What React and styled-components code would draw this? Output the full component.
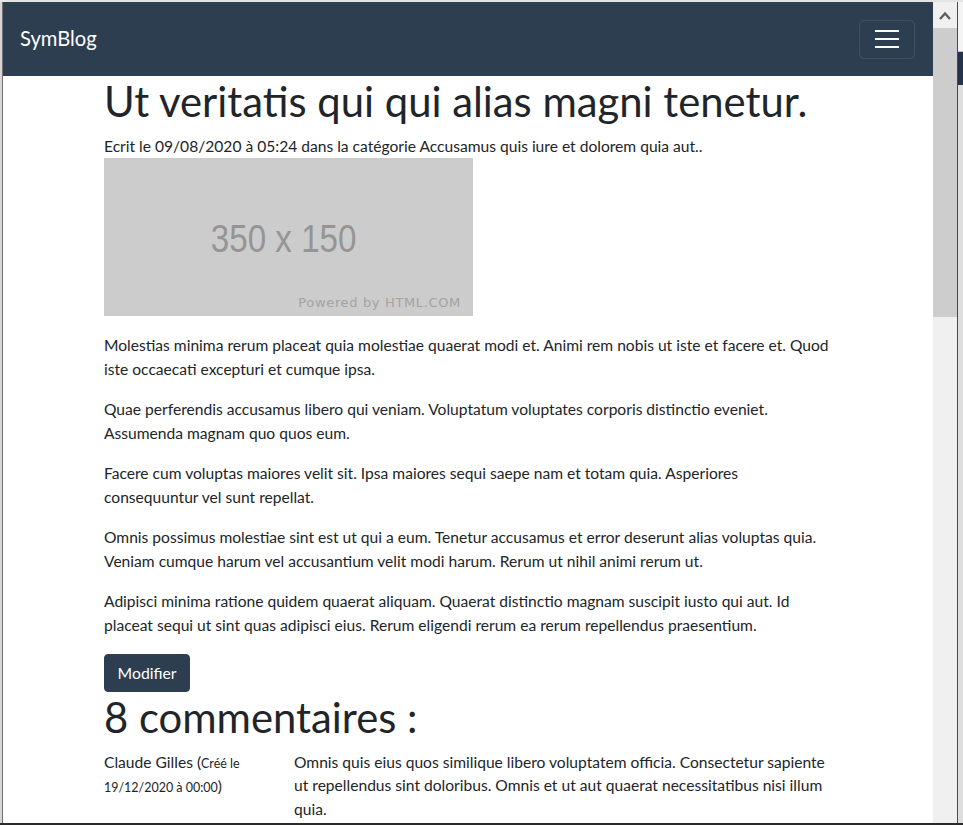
import styled, { createGlobalStyle } from "styled-components";

const GlobalStyle = createGlobalStyle`
  html, body {
    margin: 0;
    padding: 0;
    background: #f0f0f0;
  }
  * {
    box-sizing: border-box;
  }
`;

const Desktop = styled.div`
  width: 963px;
  height: 825px;
  display: flex;
  flex-direction: column;
  overflow: hidden;
  background: #e6e6e6;
  font-family: Lato, "Noto Sans", sans-serif;
`;

const TopEdge = styled.div`
  height: 2px;
  flex: none;
  background: #e4e4e4;
`;

const BottomEdge = styled.div`
  height: 2px;
  flex: none;
  background: #2a2a2a;
`;

const WindowRow = styled.div`
  flex: 1;
  display: flex;
  min-height: 0;
`;

const LeftEdge = styled.div`
  width: 3px;
  flex: none;
  background: #d6d6d6;
  border-right: 1px solid #707070;
`;

const RightEdge = styled.div`
  width: 6px;
  flex: none;
  border-left: 1px solid #4a4a4a;
  background: linear-gradient(
    to bottom,
    #f4f4f4 0,
    #f4f4f4 49px,
    #e8d000 49px,
    #e8d000 50px,
    #25324a 50px,
    #25324a 83px,
    #dedede 83px
  );
`;

const Viewport = styled.div`
  width: 930px;
  flex: none;
  overflow: hidden;
  background: #fff;
  color: #212529;
`;

const Scrollbar = styled.div`
  width: 24px;
  flex: none;
  display: flex;
  flex-direction: column;
  background: #f0f0f0;
`;

const ScrollButton = styled.div`
  height: 26px;
  display: flex;
  align-items: center;
  justify-content: center;
  background: #f0f0f0;
`;

const ScrollThumb = styled.div`
  height: 289px;
  background: #cdcdcd;
`;

const Navbar = styled.nav`
  height: 74px;
  display: flex;
  align-items: center;
  justify-content: space-between;
  padding: 0 18px 0 17px;
  background: #2c3e50;
`;

const Brand = styled.a`
  color: #fff;
  font-size: 20.2px;
  text-decoration: none;
  padding-bottom: 2px;
`;

const Toggler = styled.button`
  width: 56px;
  height: 39px;
  display: flex;
  flex-direction: column;
  align-items: center;
  justify-content: center;
  gap: 6px;
  background: transparent;
  border: 1px solid rgba(255, 255, 255, 0.1);
  border-radius: 5px;
  padding: 0;
`;

const Bar = styled.span`
  display: block;
  width: 24px;
  height: 2px;
  background: #fff;
`;

const Container = styled.main`
  width: 730px;
  margin-left: 101px;
  font-size: 15.6px;
  line-height: 23.6px;
`;

const Title = styled.h1`
  margin: 0 0 8.4px;
  font-size: 41.8px;
  font-weight: 400;
  line-height: 50.4px;
`;

const Meta = styled.p`
  margin: 1px 0 0;
`;

const Placeholder = styled.div`
  width: 369px;
  height: 158px;
  margin-bottom: 18px;
  display: grid;
  background: #cccccc;
`;

const PlaceholderSize = styled.span`
  grid-area: 1 / 1;
  align-self: center;
  justify-self: center;
  margin: 2px 10px 0 0;
  font-family: "Liberation Sans", Arial, sans-serif;
  font-size: 39px;
  line-height: 1;
  color: #959595;
  transform: scaleX(0.85);
`;

const PlaceholderCredit = styled.span`
  grid-area: 1 / 1;
  align-self: end;
  justify-self: end;
  margin: 0 12px 7px 0;
  font-family: "DejaVu Sans", sans-serif;
  font-size: 13px;
  line-height: 1;
  letter-spacing: 0.65px;
  color: #a3a3a3;
`;

const Paragraph = styled.p`
  margin: 0 0 16.8px;
`;

const Button = styled.button`
  display: block;
  padding: 6px 12.6px;
  font-family: Lato, sans-serif;
  font-size: 15.75px;
  line-height: 23.6px;
  color: #fff;
  background: #2c3e50;
  border: 1px solid #2c3e50;
  border-radius: 4px;
`;

const CommentRow = styled.div`
  display: grid;
  grid-template-columns: 160px 540px;
  column-gap: 30px;
  margin-top: 1px;
`;

const Author = styled.div`
  small {
    font-size: 80%;
  }
`;

const paragraphs = [
  "Molestias minima rerum placeat quia molestiae quaerat modi et. Animi rem nobis ut iste et facere et. Quod iste occaecati excepturi et cumque ipsa.",
  "Quae perferendis accusamus libero qui veniam. Voluptatum voluptates corporis distinctio eveniet. Assumenda magnam quo quos eum.",
  "Facere cum voluptas maiores velit sit. Ipsa maiores sequi saepe nam et totam quia. Asperiores consequuntur vel sunt repellat.",
  "Omnis possimus molestiae sint est ut qui a eum. Tenetur accusamus et error deserunt alias voluptas quia. Veniam cumque harum vel accusantium velit modi harum. Rerum ut nihil animi rerum ut.",
  "Adipisci minima ratione quidem quaerat aliquam. Quaerat distinctio magnam suscipit iusto qui aut. Id placeat sequi ut sint quas adipisci eius. Rerum eligendi rerum ea rerum repellendus praesentium.",
];

export default function App() {
  return (
    <>
      <GlobalStyle />
      <Desktop>
        <TopEdge />
        <WindowRow>
          <LeftEdge />
          <Viewport>
            <Navbar>
              <Brand href="#">SymBlog</Brand>
              <Toggler aria-label="menu">
                <Bar />
                <Bar />
                <Bar />
              </Toggler>
            </Navbar>
            <Container>
              <Title>Ut veritatis qui qui alias magni tenetur.</Title>
              <Meta>
                Ecrit le 09/08/2020 à 05:24 dans la catégorie Accusamus quis
                iure et dolorem quia aut..
              </Meta>
              <Placeholder>
                <PlaceholderSize>350 x 150</PlaceholderSize>
                <PlaceholderCredit>Powered by HTML.COM</PlaceholderCredit>
              </Placeholder>
              {paragraphs.map((text, i) => (
                <Paragraph key={i}>{text}</Paragraph>
              ))}
              <Button>Modifier</Button>
              <Title as="h2">8 commentaires :</Title>
              <CommentRow>
                <Author>
                  Claude Gilles (<small>Créé le 19/12/2020 à 00:00</small>)
                </Author>
                <div>
                  Omnis quis eius quos similique libero voluptatem officia.
                  Consectetur sapiente ut repellendus sint doloribus. Omnis et
                  ut aut quaerat necessitatibus nisi illum quia.
                </div>
              </CommentRow>
            </Container>
          </Viewport>
          <Scrollbar>
            <ScrollButton>
              <svg width="12" height="9" viewBox="0 0 12 9">
                <polyline
                  points="1,8 6,2.5 11,8"
                  fill="none"
                  stroke="#606060"
                  strokeWidth="2.4"
                />
              </svg>
            </ScrollButton>
            <ScrollThumb />
          </Scrollbar>
          <RightEdge />
        </WindowRow>
        <BottomEdge />
      </Desktop>
    </>
  );
}
